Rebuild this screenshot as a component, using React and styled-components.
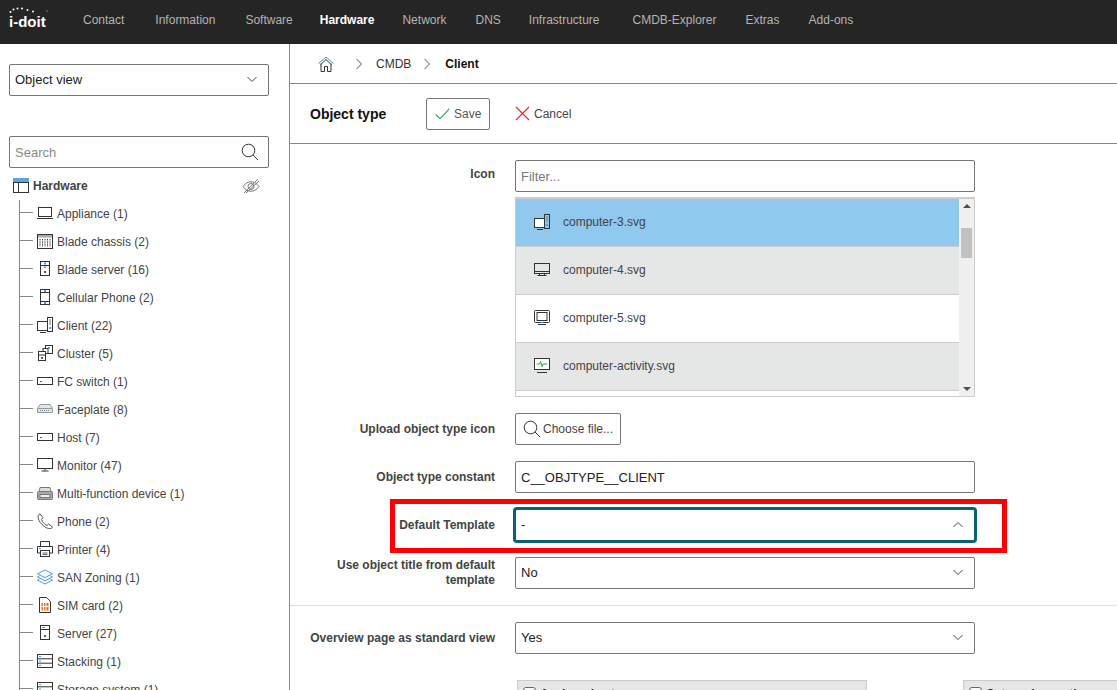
import React from "react";
import styled, { createGlobalStyle } from "styled-components";

const GlobalStyle = createGlobalStyle`
  html, body {
    margin: 0;
    height: 100%;
    overflow: hidden;
    background: #fff;
    font-family: "Liberation Sans", Arial, sans-serif;
  }
`;

const Page = styled.div`
  height: 690px;
  overflow: hidden;
  display: flex;
  flex-direction: column;
`;

const TopBar = styled.div`
  height: 44px;
  box-sizing: border-box;
  flex: none;
  display: flex;
  align-items: center;
  background: #252525;
  padding: 0 0 4px 9px;
`;

const Logo = styled.div`
  position: relative;
  width: 74px;
  color: #fff;
  font-size: 15px;
  font-weight: 700;
  line-height: 15px;
  margin-top: 2px;
`;

const LogoDots = styled.svg`
  position: absolute;
  left: 0;
  top: -7px;
`;

const NavList = styled.div`
  display: flex;
`;

const NavItem = styled.span`
  font-size: 12px;
  color: ${(p) => (p.$active ? "#fff" : "#b4b4b4")};
  font-weight: ${(p) => (p.$active ? 700 : 400)};
  margin-right: ${(p) => p.$gap}px;
`;

const Body = styled.div`
  flex: 1;
  display: flex;
  min-height: 0;
`;

const Sidebar = styled.aside`
  flex: none;
  width: 260px;
  border-right: 1px solid #888;
  padding: 20px 20px 0 9px;
`;

const Select = styled.div`
  height: 32px;
  box-sizing: border-box;
  display: flex;
  align-items: center;
  justify-content: space-between;
  padding: 0 10px 2px 5px;
  border: 1px solid ${(p) => (p.$focus ? "#07617d" : "#777")};
  border-radius: 2px;
  background: #fff;
  font-size: 13px;
  color: #222;
  box-shadow: ${(p) => (p.$focus ? "0 0 0 2px #07617d" : "none")};
`;

const SearchBox = styled(Select)`
  margin-top: 40px;
  color: #888;
  padding: 0 9px 0 5px;
`;

const TreeHead = styled.div`
  height: 36px;
  display: flex;
  align-items: center;
  padding: 0 9px 0 4px;
  gap: 4px;
  font-size: 12px;
  font-weight: 700;
  color: #444;
`;

const TreeTitle = styled.span`
  flex: 1;
`;

const Tree = styled.div`
  margin: -4px 0 0 10px;
  border-left: 1px solid #888;
`;

const TreeRow = styled.div`
  height: 28px;
  display: flex;
  align-items: center;
  font-size: 12px;
  color: #444;
`;

const Tick = styled.span`
  width: 13px;
  height: 1px;
  margin: 0 4px 4px 0;
  background: #888;
  flex: none;
`;

const TreeIcon = styled.span`
  width: 16px;
  height: 16px;
  flex: none;
  margin-right: 4px;
  margin-bottom: 2px;
  display: flex;
`;

const Main = styled.main`
  flex: 1;
  min-width: 0;
`;

const Crumbs = styled.div`
  height: 39px;
  display: flex;
  align-items: center;
  padding-left: 28px;
  border-bottom: 1px solid #888;
  font-size: 12px;
  color: #333;
`;

const Crumb = styled.span`
  font-weight: ${(p) => (p.$current ? 700 : 400)};
  color: ${(p) => (p.$current ? "#111" : "#333")};
  margin-left: ${(p) => p.$gap}px;
`;

const ChevronSlot = styled.span`
  display: flex;
  margin-left: ${(p) => p.$gap}px;
`;

const Toolbar = styled.div`
  height: 59px;
  display: flex;
  align-items: center;
  padding-left: 20px;
  border-bottom: 1px solid #888;
`;

const ToolbarTitle = styled.h1`
  margin: 0;
  width: 116px;
  font-size: 14px;
  font-weight: 700;
  color: #111;
`;

const SaveButton = styled.div`
  height: 32px;
  width: 64px;
  box-sizing: border-box;
  display: flex;
  align-items: center;
  gap: 4px;
  padding-left: 8px;
  border: 1px solid #777;
  border-radius: 2px;
  font-size: 12px;
  color: #555;
`;

const CancelButton = styled.div`
  display: flex;
  align-items: center;
  gap: 4px;
  margin-left: 25px;
  font-size: 12px;
  color: #444;
`;

const Form = styled.form`
  display: flex;
  flex-direction: column;
  gap: 16px;
  padding: 16px 0;
  border-bottom: 1px solid #ddd;
`;

const Row = styled.div`
  position: relative;
  display: grid;
  grid-template-columns: 205px 460px;
  column-gap: 20px;
  align-items: ${(p) => (p.$top ? "start" : "center")};
`;

const Label = styled.label`
  font-size: 12px;
  line-height: 15px;
  font-weight: 700;
  color: #444;
  text-align: right;
  padding-top: ${(p) => (p.$top ? "7px" : "0")};
`;

const Input = styled.div`
  height: 32px;
  box-sizing: border-box;
  display: flex;
  align-items: center;
  padding: 0 5px;
  border: 1px solid #777;
  border-radius: 2px;
  font-size: 13px;
  color: ${(p) => (p.$placeholder ? "#777" : "#222")};
`;

const IconList = styled.div`
  margin-top: 5px;
  height: 200px;
  box-sizing: border-box;
  display: flex;
  border: 1px solid #ccc;
  border-top-width: 2px;
`;

const IconRows = styled.div`
  flex: 1;
  min-width: 0;
`;

const IconRow = styled.div`
  height: 48px;
  box-sizing: border-box;
  display: flex;
  align-items: center;
  gap: 13px;
  padding: 0 0 2px 18px;
  border-bottom: 1px solid #ccc;
  background: ${(p) => p.$bg};
  font-size: 12px;
  color: #444;
`;

const Scrollbar = styled.div`
  width: 15px;
  flex: none;
  background: #f0f0f0;
  display: flex;
  flex-direction: column;
  align-items: center;
`;

const ArrowUp = styled.span`
  width: 0;
  height: 0;
  margin-top: 5px;
  border-left: 4px solid transparent;
  border-right: 4px solid transparent;
  border-bottom: 4px solid #505050;
`;

const ArrowDown = styled.span`
  width: 0;
  height: 0;
  margin-top: auto;
  margin-bottom: 5px;
  border-left: 4px solid transparent;
  border-right: 4px solid transparent;
  border-top: 4px solid #505050;
`;

const Thumb = styled.span`
  width: 11px;
  height: 30px;
  margin-top: 20px;
  background: #c1c1c1;
`;

const FileButton = styled.div`
  width: 106px;
  height: 32px;
  box-sizing: border-box;
  display: flex;
  align-items: center;
  gap: 2px;
  padding-left: 7px;
  border: 1px solid #777;
  border-radius: 2px;
  font-size: 12px;
  color: #444;
`;

const Highlight = styled.div`
  position: absolute;
  left: 100px;
  top: -10px;
  width: 617px;
  height: 54px;
  box-sizing: border-box;
  border: 5px solid #fe0000;
  pointer-events: none;
`;

const OverviewSection = styled.div`
  padding-top: 16px;
`;

const Panels = styled.div`
  display: flex;
  gap: 96px;
  margin: 26px 0 0 227px;
`;

const Panel = styled.div`
  width: 350px;
  height: 60px;
  flex: none;
  box-sizing: border-box;
  display: flex;
  gap: 4px;
  padding: 6px 5px;
  background: #e5e7e6;
  border: 1px solid #ccc;
  font-size: 12px;
  line-height: 15px;
  font-weight: 700;
  color: #222;
`;

const CheckBox = styled.span`
  width: 13px;
  height: 13px;
  box-sizing: border-box;
  flex: none;
  background: #fff;
  border: 1px solid #666;
  border-radius: 3px;
`;

/* drawings */

const Svg = ({ size = 16, children, ...rest }) => (
  <svg width={size} height={size} viewBox="0 0 16 16" fill="none" stroke="#333" strokeWidth="1" {...rest}>
    {children}
  </svg>
);

const Chevron = ({ up }) => (
  <svg width="12" height="7" viewBox="0 0 12 7" fill="none" stroke="#444" strokeWidth="1">
    <path d={up ? "M1.5 6 6 1.5 10.5 6" : "M1.5 1 6 5.5 10.5 1"} />
  </svg>
);

const CrumbChevron = () => (
  <svg width="8" height="12" viewBox="0 0 8 12" fill="none" stroke="#555" strokeWidth="1">
    <path d="M1.5 1 6.5 6 1.5 11" />
  </svg>
);

const SearchIcon = () => (
  <svg width="18" height="18" viewBox="0 0 18 18" fill="none" stroke="#333" strokeWidth="1">
    <circle cx="7.5" cy="7.5" r="6.3" />
    <path d="M12 12l5 5" />
  </svg>
);

const HomeIcon = () => (
  <svg width="16" height="16" viewBox="0 0 16 16" fill="none" strokeWidth="1">
    <path d="M.5 7.5 8 1l7.5 6.5" stroke="#3a8fd0" />
    <path d="M3 7.5v8h3.5v-5h3v5H13v-8" stroke="#333" />
    <path d="M2.5 8.8 8 3.5l5.5 5.3" stroke="#333" />
  </svg>
);

const EyeOff = () => (
  <svg width="18" height="16" viewBox="0 0 18 16" fill="none" stroke="#777" strokeWidth="1">
    <path d="M1 8.5C3.5 5 6 3.8 9 3.8s5.5 1.2 8 4.7c-2.5 3.5-5 4.7-8 4.7s-5.5-1.2-8-4.7Z" />
    <circle cx="9" cy="8.5" r="3" />
    <path d="M2 15 16 1M4 15 17 3" />
  </svg>
);

const HardwareIcon = () => (
  <Svg>
    <rect x=".5" y=".5" width="15" height="14" />
    <rect x="0" y="0" width="16" height="4" fill="#5aa7e0" stroke="none" />
    <path d="M5.5 4v10.5M0 4.5h16" />
  </Svg>
);

const Laptop = () => (
  <Svg>
    <rect x="1.5" y="2.5" width="13" height="9" />
    <path d="M0 13.5h16" />
  </Svg>
);

const BladeChassis = () => (
  <Svg>
    <rect x=".5" y="1.5" width="15" height="14" />
    <rect x="1" y="2" width="14" height="2.5" fill="#aaa" stroke="none" />
    <path d="M3 6v8M5.5 6v8M8 6v8M10.5 6v8M13 6v8" strokeDasharray="1 .6" />
  </Svg>
);

const Tower = () => (
  <Svg>
    <rect x="3.5" y=".5" width="9" height="14" />
    <path d="M3.5 4.5h9" />
    <rect x="7" y="1.5" width="2" height="2" fill="#4a9fdc" stroke="none" />
    <rect x="7" y="5.5" width="2" height="1.5" fill="#4a9fdc" stroke="none" />
    <rect x="7" y="10" width="2" height="2" fill="#555" stroke="none" />
  </Svg>
);

const Cellular = () => (
  <Svg>
    <rect x="3.5" y=".5" width="9" height="15" />
    <path d="M3.5 3.5h9M3.5 12.5h9" />
    <rect x="7" y="1" width="2" height="2" fill="#4a9fdc" stroke="none" />
    <rect x="7" y="13" width="2" height="2" fill="#4a9fdc" stroke="none" />
  </Svg>
);

const Client = () => (
  <Svg>
    <rect x="10.5" y=".5" width="5" height="14" />
    <rect x=".5" y="4.5" width="10" height="9" fill="#fff" />
    <path d="M3 15.5h6" />
    <rect x="12.2" y="10" width="2" height="2" fill="#4a9fdc" stroke="none" />
    <path d="M12 3h2M12 5h2M12 7h2" stroke="#777" />
  </Svg>
);

const Cluster = () => (
  <Svg>
    <rect x="8.5" y=".5" width="7" height="8" />
    <rect x="6" y="3.5" width="5" height="5" fill="#fff" />
    <rect x="1.5" y="6.5" width="7" height="9" fill="#fff" />
    <rect x="11" y="2" width="2" height="2" fill="#4a9fdc" stroke="none" />
    <path d="M1.5 10h7" />
    <rect x="4" y="12" width="2" height="2" fill="#555" stroke="none" />
  </Svg>
);

const FlatBox = () => (
  <Svg>
    <rect x=".5" y="4.5" width="15" height="7" />
    <rect x="3" y="8" width="2" height="1" fill="#e02020" stroke="none" />
  </Svg>
);

const Faceplate = () => (
  <Svg stroke="#999">
    <path d="M3 3.5h10l2.5 4v4h-15v-4Z" fill="#e3e5e8" />
    <path d="M1 7.5h14" />
    <path d="M3 9.5h10" stroke="#6a87a8" strokeDasharray="1 1" />
  </Svg>
);

const Monitor = () => (
  <Svg>
    <rect x=".5" y="1.5" width="15" height="10" />
    <path d="M8 11.5v2M4.5 14h7" />
  </Svg>
);

const Mfd = () => (
  <Svg stroke="#777">
    <path d="M3 2.5h10l1 4H2Z" fill="#ddd" />
    <rect x=".5" y="6.5" width="15" height="8" rx="1" fill="#aaa" />
    <rect x="3" y="9.5" width="10" height="3" fill="#eee" />
  </Svg>
);

const Phone = () => (
  <Svg stroke="#555">
    <path d="M1 2.5 3 .8l3 4-1.5 1.5c.8 2.8 3 5.2 5.5 6.2l1.6-1.5 4 3-1.6 1.8C8 16 .5 9 1 2.5Z" />
  </Svg>
);

const Printer = () => (
  <Svg>
    <path d="M3.5 5V.5h9V5" />
    <path d="M3.5 12H.5V5.5h15V12h-3" />
    <rect x="3.5" y="9.5" width="9" height="6" fill="#fff" />
    <path d="M5.5 12h5M5.5 13.5h5" stroke="#666" />
    <rect x="2" y="7" width="2" height="1" fill="#4a9fdc" stroke="none" />
  </Svg>
);

const Layers = () => (
  <Svg stroke="#4a9fdc">
    <path d="M8 1 15.5 4.8 8 8.6.5 4.8ZM2.5 6.8.5 8 8 11.8 15.5 8l-2-1.2M2.5 10 .5 11.2 8 15l7.5-3.8-2-1.2" />
  </Svg>
);

const SimCard = () => (
  <Svg>
    <path d="M2.5.5h7l4 4v11h-11Z" />
    <rect x="4.5" y="6" width="7" height="7.5" fill="#e8701f" stroke="none" />
    <path d="M6.5 6v7.5M9 6v7.5M4.5 9.5h7" stroke="#fff" />
  </Svg>
);

const Server = () => (
  <Svg>
    <rect x="3.5" y=".5" width="9" height="14" />
    <path d="M3.5 4.5h9" />
    <path d="M5 2.5h3" stroke="#4a9fdc" />
    <rect x="7" y="10" width="2" height="2" fill="#555" stroke="none" />
  </Svg>
);

const Stacking = () => (
  <Svg>
    <rect x=".5" y="1.5" width="15" height="13" />
    <path d="M.5 5.8h15M.5 10.2h15" />
    <path d="M2 3.6h2M2 8h2M2 12.4h2" stroke="#4a9fdc" />
  </Svg>
);

const Computer4 = () => (
  <Svg>
    <rect x=".5" y="1.5" width="15" height="10" />
    <path d="M.5 9.5h15M5.5 11.5v2M10.5 11.5v2M3.5 13.5h9" />
  </Svg>
);

const Computer5 = () => (
  <Svg>
    <rect x=".5" y=".5" width="15" height="12" rx="1" />
    <rect x="3" y="2.5" width="10" height="8" />
    <path d="M7 12.5h2" stroke="#4a9fdc" />
    <path d="M4 14.5h8" />
  </Svg>
);

const ComputerActivity = () => (
  <Svg>
    <rect x=".5" y=".5" width="15" height="11" fill="#fff" />
    <path d="M2.5 6h3l1-2.5 1.5 5 1.2-2.5h4" stroke="#1da84f" />
    <path d="M3 14.5h10" />
  </Svg>
);

const navItems = [
  ["Contact", 31],
  ["Information", 30],
  ["Software", 27],
  ["Hardware", 28],
  ["Network", 29],
  ["DNS", 28],
  ["Infrastructure", 33],
  ["CMDB-Explorer", 29],
  ["Extras", 29],
  ["Add-ons", 0],
];

const treeItems = [
  [Laptop, "Appliance (1)"],
  [BladeChassis, "Blade chassis (2)"],
  [Tower, "Blade server (16)"],
  [Cellular, "Cellular Phone (2)"],
  [Client, "Client (22)"],
  [Cluster, "Cluster (5)"],
  [FlatBox, "FC switch (1)"],
  [Faceplate, "Faceplate (8)"],
  [FlatBox, "Host (7)"],
  [Monitor, "Monitor (47)"],
  [Mfd, "Multi-function device (1)"],
  [Phone, "Phone (2)"],
  [Printer, "Printer (4)"],
  [Layers, "SAN Zoning (1)"],
  [SimCard, "SIM card (2)"],
  [Server, "Server (27)"],
  [Stacking, "Stacking (1)"],
  [Stacking, "Storage system (1)"],
];

const iconRows = [
  [Client, "computer-3.svg", "#90c8ee"],
  [Computer4, "computer-4.svg", "#e5e7e6"],
  [Computer5, "computer-5.svg", "#fff"],
  [ComputerActivity, "computer-activity.svg", "#e5e7e6"],
];

export default function App() {
  return (
    <Page>
      <GlobalStyle />
      <TopBar>
        <Logo>
          <LogoDots width="40" height="10" viewBox="0 0 40 10" fill="#fff">
            <circle cx="1.5" cy="5" r="1" />
            <circle cx="4.5" cy="2.5" r="1" />
            <circle cx="8.5" cy="1.5" r="1" />
            <circle cx="13" cy="1.5" r="1" />
            <circle cx="18.5" cy="3" r="1" />
            <circle cx="24" cy="4.5" r="1" />
            <circle cx="38" cy="4" r=".7" fill="#999" />
          </LogoDots>
          i-doit
        </Logo>
        <NavList>
          {navItems.map(([item, gap]) => (
            <NavItem key={item} $gap={gap} $active={item === "Hardware"}>
              {item}
            </NavItem>
          ))}
        </NavList>
      </TopBar>
      <Body>
        <Sidebar>
          <Select>
            Object view
            <Chevron />
          </Select>
          <SearchBox>
            Search
            <SearchIcon />
          </SearchBox>
          <TreeHead>
            <HardwareIcon />
            <TreeTitle>Hardware</TreeTitle>
            <EyeOff />
          </TreeHead>
          <Tree>
            {treeItems.map(([Icon, label]) => (
              <TreeRow key={label}>
                <Tick />
                <TreeIcon>
                  <Icon />
                </TreeIcon>
                {label}
              </TreeRow>
            ))}
          </Tree>
        </Sidebar>
        <Main>
          <Crumbs>
            <HomeIcon />
            <ChevronSlot $gap={21}>
              <CrumbChevron />
            </ChevronSlot>
            <Crumb $gap={13}>CMDB</Crumb>
            <ChevronSlot $gap={12}>
              <CrumbChevron />
            </ChevronSlot>
            <Crumb $gap={14} $current>
              Client
            </Crumb>
          </Crumbs>
          <Toolbar>
            <ToolbarTitle>Object type</ToolbarTitle>
            <SaveButton>
              <svg width="15" height="12" viewBox="0 0 15 12" fill="none" stroke="#1da84f" strokeWidth="1.1">
                <path d="M.8 6.5 5 10.8 14.2.8" />
              </svg>
              Save
            </SaveButton>
            <CancelButton>
              <svg width="15" height="15" viewBox="0 0 15 15" fill="none" stroke="#e8242a" strokeWidth="1.1">
                <path d="M1 1l13 13M14 1 1 14" />
              </svg>
              Cancel
            </CancelButton>
          </Toolbar>
          <Form>
            <Row $top>
              <Label $top>Icon</Label>
              <div>
                <Input $placeholder>Filter...</Input>
                <IconList>
                  <IconRows>
                    {iconRows.map(([Icon, label, bg]) => (
                      <IconRow key={label} $bg={bg}>
                        <Icon />
                        {label}
                      </IconRow>
                    ))}
                  </IconRows>
                  <Scrollbar>
                    <ArrowUp />
                    <Thumb />
                    <ArrowDown />
                  </Scrollbar>
                </IconList>
              </div>
            </Row>
            <Row>
              <Label>Upload object type icon</Label>
              <FileButton>
                <SearchIcon />
                Choose file...
              </FileButton>
            </Row>
            <Row>
              <Label>Object type constant</Label>
              <Input>C__OBJTYPE__CLIENT</Input>
            </Row>
            <Row>
              <Label>Default Template</Label>
              <Select $focus>
                -
                <Chevron up />
              </Select>
              <Highlight />
            </Row>
            <Row>
              <Label>Use object title from default template</Label>
              <Select>
                No
                <Chevron />
              </Select>
            </Row>
          </Form>
          <OverviewSection>
            <Row>
              <Label>Overview page as standard view</Label>
              <Select>
                Yes
                <Chevron />
              </Select>
            </Row>
            <Panels>
              <Panel>
                <CheckBox />
                Assigned cat.
              </Panel>
              <Panel>
                <CheckBox />
                Categories on the
              </Panel>
            </Panels>
          </OverviewSection>
        </Main>
      </Body>
    </Page>
  );
}
